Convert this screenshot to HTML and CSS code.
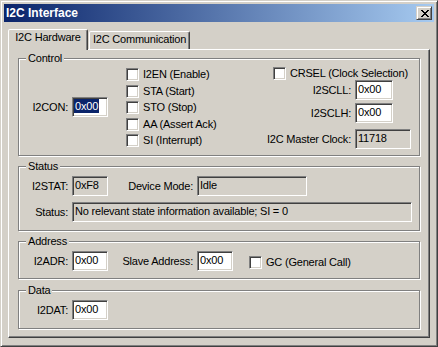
FILE: index.html
```html
<!DOCTYPE html>
<html>
<head>
<meta charset="utf-8">
<title>I2C Interface</title>
<link rel="stylesheet" href="styles.css">
</head>
<body>
<div class="window">
  <div class="titlebar">
    <span class="title">I2C Interface</span>
    <div class="close">
      <svg width="8" height="7" viewBox="0 0 8 7" shape-rendering="crispEdges"><path fill="#000" d="M0 0h2v1h-2zM6 0h2v1h-2zM1 1h2v1h-2zM5 1h2v1h-2zM2 2h4v1h-4zM3 3h2v1h-2zM2 4h4v1h-4zM1 5h2v1h-2zM5 5h2v1h-2zM0 6h2v1h-2zM6 6h2v1h-2z"/></svg>
    </div>
  </div>
  <div class="client">
    <div class="tabs">
      <div class="tab active">I2C Hardware</div>
      <div class="tab inactive">I2C Communication</div>
    </div>
    <div class="panel">
      <div class="group g-control">
        <div class="group-title">Control</div>
        <div class="control-body">
          <div class="field i2con">
            <span class="lbl">I2CON:</span>
            <div class="edit w36"><span class="sel">0x00</span></div>
          </div>
          <div class="checks">
            <div class="check"><span class="box"></span><span>I2EN (Enable)</span></div>
            <div class="check"><span class="box"></span><span>STA (Start)</span></div>
            <div class="check"><span class="box"></span><span>STO (Stop)</span></div>
            <div class="check"><span class="box"></span><span>AA (Assert Ack)</span></div>
            <div class="check"><span class="box"></span><span>SI (Interrupt)</span></div>
          </div>
          <div class="rightcol">
            <div class="check crsel"><span class="box"></span><span>CRSEL (Clock Selection)</span></div>
            <div class="field">
              <span class="lbl lbl-r">I2SCLL:</span>
              <div class="edit w38">0x00</div>
            </div>
            <div class="field f-sclh">
              <span class="lbl lbl-r">I2SCLH:</span>
              <div class="edit w38">0x00</div>
            </div>
            <div class="field f-clock">
              <span class="lbl lbl-r">I2C Master Clock:</span>
              <div class="edit ro w56">11718</div>
            </div>
          </div>
        </div>
      </div>

      <div class="group g-status">
        <div class="group-title">Status</div>
        <div class="row">
          <div class="field">
            <span class="lbl">I2STAT:</span>
            <div class="edit ro w36">0xF8</div>
          </div>
          <div class="field">
            <span class="lbl lbl-m">Device Mode:</span>
            <div class="edit ro w110">Idle</div>
          </div>
        </div>
        <div class="row row2">
          <div class="field">
            <span class="lbl">Status:</span>
            <div class="edit ro w340">No relevant state information available; SI = 0</div>
          </div>
        </div>
      </div>

      <div class="group g-address">
        <div class="group-title">Address</div>
        <div class="row">
          <div class="field">
            <span class="lbl">I2ADR:</span>
            <div class="edit w36">0x00</div>
          </div>
          <div class="field">
            <span class="lbl lbl-m">Slave Address:</span>
            <div class="edit w36">0x00</div>
          </div>
          <div class="check gc"><span class="box"></span><span>GC (General Call)</span></div>
        </div>
      </div>

      <div class="group g-data">
        <div class="group-title">Data</div>
        <div class="row">
          <div class="field">
            <span class="lbl">I2DAT:</span>
            <div class="edit w36">0x00</div>
          </div>
        </div>
      </div>
    </div>
  </div>
</div>
</body>
</html>
```

FILE: styles.css
```css
* { box-sizing: border-box; }

html, body {
  margin: 0;
  padding: 0;
  background: #D4D0C8;
}

body {
  font-family: "Liberation Sans", Arial, sans-serif;
  font-size: 11px;
  line-height: 13px;
  color: #000;
  letter-spacing: -0.2px;
}

.window {
  width: 438px;
  height: 347px;
  border: 1px solid;
  border-color: #D4D0C8 #404040 #404040 #D4D0C8;
  box-shadow: inset 1px 1px #FFFFFF, inset -1px -1px #808080;
  padding: 3px;
  background: #D4D0C8;
}

.titlebar {
  height: 18px;
  background: linear-gradient(to right, #0A246A, #A6CAF0);
  display: flex;
  align-items: center;
  justify-content: space-between;
  padding: 0 2px 0 2px;
}

.title {
  color: #fff;
  font-weight: bold;
  font-size: 12px;
  letter-spacing: 0;
}

.close {
  width: 16px;
  height: 14px;
  border: 1px solid;
  border-color: #D4D0C8 #404040 #404040 #D4D0C8;
  box-shadow: inset 1px 1px #FFFFFF, inset -1px -1px #808080;
  background: #D4D0C8;
  display: flex;
  align-items: center;
  justify-content: center;
  padding-left: 1px;
}

.close svg { display: block; }

.client {
  padding: 7px 4px 0 4px;
}

.tabs {
  display: flex;
  align-items: flex-end;
  height: 20px;
}

.tab {
  height: 18px;
  padding-top: 1px;
  text-align: center;
  white-space: nowrap;
  border: 1px solid;
  border-bottom: none;
  border-color: #FFFFFF #404040 transparent #FFFFFF;
  box-shadow: inset -1px 0 #808080;
  border-radius: 2px 2px 0 0;
  background: #D4D0C8;
}

.tab.active {
  width: 80px;
  height: 21px;
  margin-bottom: -1px;
  position: relative;
  z-index: 1;
}

.tab.inactive {
  width: 101px;
  margin-left: 1px;
}

.panel {
  height: 289px;
  border: 1px solid;
  border-color: #FFFFFF #404040 #404040 #FFFFFF;
  box-shadow: inset -1px -1px #808080;
  padding: 0 9px;
}

.group {
  border: 1px solid #808080;
  box-shadow: inset 1px 1px #FFFFFF, 1px 1px #FFFFFF;
  margin-top: 10px;
}

.g-control { margin-top: 8px; height: 98px; }
.g-status { height: 65px; }
.g-address { height: 38px; }
.g-data { margin-top: 11px; height: 39px; }

.group-title {
  width: fit-content;
  height: 13px;
  margin: -7px 0 0 7px;
  padding: 0 2px;
  background: #D4D0C8;
}

.control-body {
  display: flex;
  align-items: flex-start;
  padding-top: 2px;
}

.field {
  display: flex;
  align-items: flex-start;
}

.lbl {
  width: 49px;
  flex-shrink: 0;
  margin-right: 4px;
  text-align: right;
  line-height: 20px;
  white-space: nowrap;
}

.lbl-m { width: 85px; }
.lbl-r { width: 89px; }

.edit {
  height: 20px;
  border: 1px solid;
  border-color: #808080 #FFFFFF #FFFFFF #808080;
  box-shadow: inset 1px 1px #404040, inset -1px -1px #D4D0C8;
  background: #FFFFFF;
  padding: 0 2px 0 2px;
  line-height: 16px;
  white-space: nowrap;
  overflow: hidden;
  flex-shrink: 0;
}

.edit.ro { background: #D4D0C8; }

.w36 { width: 36px; }
.w38 { width: 38px; }
.w56 { width: 56px; }
.w110 { width: 110px; }
.w340 { width: 340px; }

.sel {
  display: inline-block;
  background: #0A246A;
  color: #FFFFFF;
  line-height: 14px;
  margin-left: -1px;
  padding: 0 1px;
}

.i2con { margin-top: 30px; }

.checks {
  display: flex;
  flex-direction: column;
  gap: 3.5px;
  margin-left: 18px;
  margin-top: 1px;
}

.check {
  display: flex;
  align-items: center;
  height: 13px;
  white-space: nowrap;
}

.box {
  width: 13px;
  height: 13px;
  flex-shrink: 0;
  margin-right: 4px;
  border: 1px solid;
  border-color: #808080 #FFFFFF #FFFFFF #808080;
  box-shadow: inset 1px 1px #404040, inset -1px -1px #D4D0C8;
  background: #FFFFFF;
}

.rightcol {
  display: flex;
  flex-direction: column;
  width: 149px;
  margin-left: auto;
  margin-right: 8px;
}

.crsel { margin-left: 11px; }
.f-sclh { margin-top: 3px; }
.f-clock { margin-top: 6px; }

.row {
  display: flex;
  align-items: center;
  margin-top: 3px;
}

.row2 { margin-top: 6px; }

.gc {
  margin-left: 16px;
  margin-top: 3px;
}
```
